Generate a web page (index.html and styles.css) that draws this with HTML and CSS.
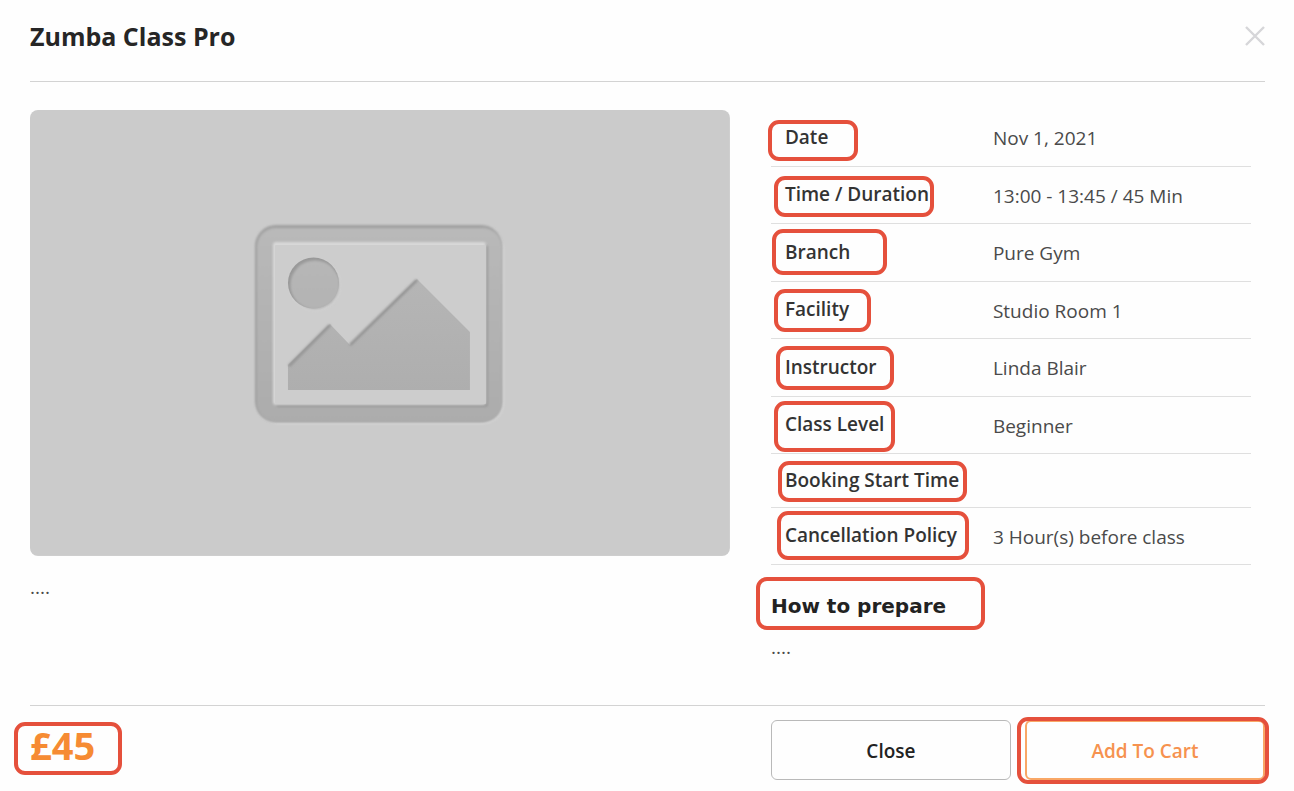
FILE: index.html
```html
<!DOCTYPE html>
<html lang="en">
<head>
  <meta charset="UTF-8">
  <title>Zumba Class Pro</title>
  <link rel="stylesheet" href="styles.css">
</head>
<body>
  <div class="modal">
    <header class="modal-header">
      <h1>Zumba Class Pro</h1>
      <button class="close-icon" type="button" aria-label="Close">
        <svg viewBox="0 0 20 20" width="20" height="20">
          <path d="M1 1 L19 19 M19 1 L1 19" fill="none" stroke="#d6d6d9" stroke-width="2.4"/>
        </svg>
      </button>
    </header>

    <main class="columns modal-body">
      <section>
        <svg class="picture" viewBox="0 0 700 446" role="img" aria-label="No image">
          <defs>
            <linearGradient id="shade" gradientUnits="userSpaceOnUse" x1="0" y1="116" x2="0" y2="312">
              <stop offset="0" stop-color="#b9b9b9"/>
              <stop offset="1" stop-color="#acacac"/>
            </linearGradient>
            <filter id="soft"><feGaussianBlur stdDeviation="0.9"/></filter>
          </defs>
          <rect width="700" height="446" fill="#cbcbcb"/>
          <!-- frame: light edge bottom right, dark edge top left -->
          <rect x="229" y="119" width="245" height="195" rx="21" fill="#d6d6d6" filter="url(#soft)"/>
          <rect x="225" y="115" width="247" height="197" rx="21" fill="#a0a0a0" filter="url(#soft)"/>
          <rect x="227" y="118" width="245" height="194" rx="19" fill="url(#shade)" filter="url(#soft)"/>
          <rect x="246" y="135" width="212" height="162" rx="3" fill="#989898" filter="url(#soft)"/>
          <rect x="243" y="132" width="213" height="163" rx="3" fill="#d8d8d8" filter="url(#soft)"/>
          <rect x="245" y="135" width="211" height="159" rx="1" fill="#cdcdcd"/>
          <!-- sun -->
          <circle cx="285" cy="175" r="25.5" fill="#d8d8d8" filter="url(#soft)"/>
          <circle cx="283.5" cy="173" r="25.5" fill="#999"/>
          <circle cx="285" cy="175" r="24.5" fill="url(#shade)" filter="url(#soft)"/>
          <!-- mountains -->
          <path d="M260 282 H441" stroke="#dadada" stroke-width="3" filter="url(#soft)"/>
          <path d="M258 255 L300 214 L320 235 L387 169 L440 222 V280 H258 Z" fill="url(#shade)"/>
          <path d="M259 280 V256" fill="none" stroke="#a0a0a0" stroke-width="2" filter="url(#soft)"/>
          <path d="M259 256 L300 215 M320 235 L387 170" fill="none" stroke="#959595" stroke-width="3" filter="url(#soft)"/>
        </svg>
        <p class="note">....</p>
      </section>

      <section class="details">
        <table>
          <tr><th scope="row">Date<span class="mark mark-date"></span></th><td>Nov 1, 2021</td></tr>
          <tr><th scope="row">Time / Duration<span class="mark mark-time"></span></th><td>13:00 - 13:45 / 45 Min</td></tr>
          <tr><th scope="row">Branch<span class="mark mark-branch"></span></th><td>Pure Gym</td></tr>
          <tr><th scope="row">Facility<span class="mark mark-facility"></span></th><td>Studio Room 1</td></tr>
          <tr><th scope="row">Instructor<span class="mark mark-instructor"></span></th><td>Linda Blair</td></tr>
          <tr><th scope="row">Class Level<span class="mark mark-level"></span></th><td>Beginner</td></tr>
          <tr class="short"><th scope="row">Booking Start Time<span class="mark mark-booking"></span></th><td></td></tr>
          <tr><th scope="row">Cancellation Policy<span class="mark mark-policy"></span></th><td>3 Hour(s) before class</td></tr>
        </table>
        <h2>How to prepare<span class="mark mark-prepare"></span></h2>
        <p class="note">....</p>
      </section>
    </main>

    <footer class="columns modal-footer">
      <div class="price">£45<span class="mark mark-price"></span></div>
      <div class="actions">
        <button class="btn" type="button">Close</button>
        <button class="btn btn-cart" type="button">Add To Cart<span class="mark mark-cart"></span></button>
      </div>
    </footer>
  </div>
</body>
</html>
```

FILE: styles.css
```css
* {
  box-sizing: border-box;
}

body {
  margin: 0;
  background-color: #fefefe;
  font-family: "Open Sans", "Noto Sans", sans-serif;
  font-size: 19px;
  color: #4a4a4a;
}

h1, h2, p {
  margin: 0;
}

.modal {
  padding: 0 29px 11px 30px;
}

.modal-header {
  display: flex;
  justify-content: space-between;
  align-items: center;
  height: 82px;
  padding-bottom: 9px;
  border-bottom: 1px solid #d3d3d3;
}

h1 {
  font-size: 25px;
  font-weight: 700;
  color: #262626;
}

.close-icon {
  display: flex;
  padding: 0;
  border: none;
  background: none;
  cursor: pointer;
}

.columns {
  display: grid;
  grid-template-columns: 17fr 12fr;
  column-gap: 41px;
}

.modal-body {
  min-height: 623px;
  padding-top: 28px;
}

.picture {
  display: block;
  width: 100%;
  border-radius: 8px;
}

.note {
  margin-top: 17px;
  line-height: 28px;
}

/* class details */
.details {
  margin-top: -1px;
  padding-right: 14px;
}

table {
  width: 100%;
  border-collapse: separate;
  border-spacing: 0;
}

th, td {
  height: 58px;
  padding: 0;
  border-bottom: 1px solid #dfdfdf;
  text-align: left;
  line-height: 28px;
}

tr:nth-child(even) th,
tr:nth-child(even) td {
  height: 57px;
}

tr.short th,
tr.short td {
  height: 54px;
}

th {
  position: relative;
  width: 222px;
  padding-bottom: 2px;
  padding-left: 14px;
  font-weight: 600;
  color: #333;
  white-space: nowrap;
}

td {
  padding-top: 1px;
}

h2 {
  position: relative;
  margin-top: 25px;
  font-family: "DejaVu Sans", sans-serif;
  font-size: 20px;
  font-weight: 700;
  line-height: 32px;
  color: #222;
}

h2 + .note {
  margin-top: 11px;
}

/* footer */
.modal-footer {
  padding-top: 14px;
  border-top: 1px solid #d3d3d3;
}

.price {
  position: relative;
  font-size: 38px;
  font-weight: 700;
  line-height: 50px;
  color: #f68b33;
}

.actions {
  display: grid;
  grid-template-columns: 1fr 1fr;
  gap: 14px;
}

.btn {
  position: relative;
  height: 60px;
  padding: 2px 0 0;
  border: 1px solid #b9b9b9;
  border-radius: 6px;
  background-color: #fefefe;
  font-family: inherit;
  font-size: 19px;
  font-weight: 600;
  color: #222;
  cursor: pointer;
}

.btn-cart {
  border: 2px solid #f9a766;
  color: #f6924f;
}

/* red highlight frames */
.mark {
  position: absolute;
  border: 4px solid #e5503c;
  border-radius: 11px;
  pointer-events: none;
}

.mark-date { left: -3px; top: 11px; width: 90px; height: 41px; }
.mark-time { left: 3px; top: 9px; width: 160px; height: 41px; }
.mark-branch { left: 1px; top: 5px; width: 115px; height: 46px; }
.mark-facility { left: 3px; top: 7px; width: 97px; height: 43px; }
.mark-instructor { left: 5px; top: 7px; width: 118px; height: 44px; }
.mark-level { left: 3px; top: 4px; width: 121px; height: 51px; }
.mark-booking { left: 7px; top: 7px; width: 189px; height: 41px; }
.mark-policy { left: 6px; top: 3px; width: 192px; height: 49px; }
.mark-prepare { left: -15px; top: -13px; width: 229px; height: 53px; }
.mark-price { left: -16px; top: 2px; width: 108px; height: 53px; }
.mark-cart { inset: -5px -6px -6px -10px; }
```
